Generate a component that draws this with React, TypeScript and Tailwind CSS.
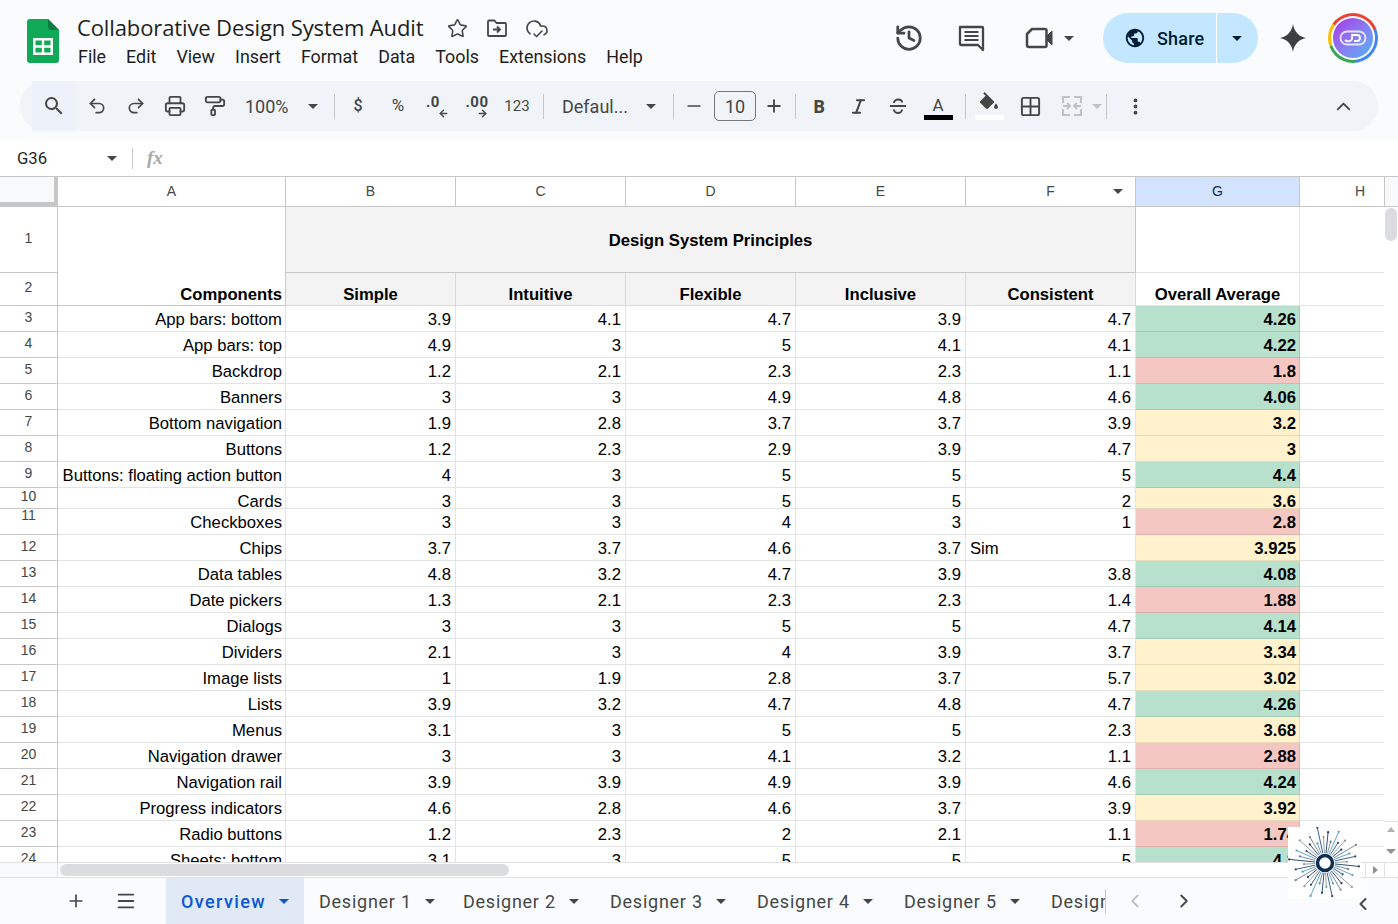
import React from 'react';
import {
  ChevronLeft, ChevronRight, ChevronUp, CloudCheck, Grid2x2, History, Italic, Menu,
  Minus, MoreVertical, PaintRoller, Plus, Printer, Redo2, Star, Undo2,
  ArrowLeft, ArrowRight,
} from 'lucide-react';

type Tone = 'g' | 'r' | 'y';
type Row = { n: number; name: string; vals: string[]; avg: string; tone: Tone };

const rows: Row[] = [
  { n: 3, name: 'App bars: bottom', vals: ['3.9', '4.1', '4.7', '3.9', '4.7'], avg: '4.26', tone: 'g' },
  { n: 4, name: 'App bars: top', vals: ['4.9', '3', '5', '4.1', '4.1'], avg: '4.22', tone: 'g' },
  { n: 5, name: 'Backdrop', vals: ['1.2', '2.1', '2.3', '2.3', '1.1'], avg: '1.8', tone: 'r' },
  { n: 6, name: 'Banners', vals: ['3', '3', '4.9', '4.8', '4.6'], avg: '4.06', tone: 'g' },
  { n: 7, name: 'Bottom navigation', vals: ['1.9', '2.8', '3.7', '3.7', '3.9'], avg: '3.2', tone: 'y' },
  { n: 8, name: 'Buttons', vals: ['1.2', '2.3', '2.9', '3.9', '4.7'], avg: '3', tone: 'y' },
  { n: 9, name: 'Buttons: floating action button', vals: ['4', '3', '5', '5', '5'], avg: '4.4', tone: 'g' },
  { n: 10, name: 'Cards', vals: ['3', '3', '5', '5', '2'], avg: '3.6', tone: 'y' },
  { n: 11, name: 'Checkboxes', vals: ['3', '3', '4', '3', '1'], avg: '2.8', tone: 'r' },
  { n: 12, name: 'Chips', vals: ['3.7', '3.7', '4.6', '3.7', 'Sim'], avg: '3.925', tone: 'y' },
  { n: 13, name: 'Data tables', vals: ['4.8', '3.2', '4.7', '3.9', '3.8'], avg: '4.08', tone: 'g' },
  { n: 14, name: 'Date pickers', vals: ['1.3', '2.1', '2.3', '2.3', '1.4'], avg: '1.88', tone: 'r' },
  { n: 15, name: 'Dialogs', vals: ['3', '3', '5', '5', '4.7'], avg: '4.14', tone: 'g' },
  { n: 16, name: 'Dividers', vals: ['2.1', '3', '4', '3.9', '3.7'], avg: '3.34', tone: 'y' },
  { n: 17, name: 'Image lists', vals: ['1', '1.9', '2.8', '3.7', '5.7'], avg: '3.02', tone: 'y' },
  { n: 18, name: 'Lists', vals: ['3.9', '3.2', '4.7', '4.8', '4.7'], avg: '4.26', tone: 'g' },
  { n: 19, name: 'Menus', vals: ['3.1', '3', '5', '5', '2.3'], avg: '3.68', tone: 'y' },
  { n: 20, name: 'Navigation drawer', vals: ['3', '3', '4.1', '3.2', '1.1'], avg: '2.88', tone: 'r' },
  { n: 21, name: 'Navigation rail', vals: ['3.9', '3.9', '4.9', '3.9', '4.6'], avg: '4.24', tone: 'g' },
  { n: 22, name: 'Progress indicators', vals: ['4.6', '2.8', '4.6', '3.7', '3.9'], avg: '3.92', tone: 'y' },
  { n: 23, name: 'Radio buttons', vals: ['1.2', '2.3', '2', '2.1', '1.1'], avg: '1.74', tone: 'r' },
  { n: 24, name: 'Sheets: bottom', vals: ['3.1', '3', '5', '5', '5'], avg: '4.2', tone: 'g' },
];

const toneClass: Record<Tone, string> = {
  g: 'bg-[#b7e1cd] border-[#a3c9b7]',
  r: 'bg-[#f4c7c3] border-[#dbb2af]',
  y: 'bg-[#fff2cc] border-[#e5d9b7]',
};

function Caret({ className = '' }: { className?: string }) {
  return <span className={`inline-block w-0 h-0 border-l-[5px] border-r-[5px] border-t-[5px] border-l-transparent border-r-transparent ${className}`} />;
}

function Sep() {
  return <div className="w-px h-[25px] bg-[#c7c7c7] shrink-0" />;
}

function Slot({ w, children }: { w: string; children: React.ReactNode }) {
  return <div className={`${w} h-full shrink-0 flex items-center justify-center text-[#444746]`}>{children}</div>;
}

function SheetsLogo() {
  return (
    <svg width="32" height="44" viewBox="0 0 32 44">
      <path d="M3 0h18l11 11v30a3 3 0 0 1-3 3H3a3 3 0 0 1-3-3V3a3 3 0 0 1 3-3z" fill="#0fa958" />
      <path d="M21 0l11 11H24a3 3 0 0 1-3-3z" fill="#0a7c41" />
      <path d="M6 19h20v17H6z M8.500 21.500v4.700h6.300v-4.700z M17.200 21.500v4.700h6.300v-4.700z M8.500 28.700v4.800h6.300v-4.800z M17.200 28.700v4.800h6.300v-4.800z" fill="#fff" fillRule="evenodd" />
    </svg>
  );
}

function TopBar() {
  return (
    <div className="h-[81px] shrink-0 flex items-start">
      <div className="w-[77px] shrink-0 pt-[19px] pl-[27px]">
        <SheetsLogo />
      </div>
      <div className="w-[760px] shrink-0 pt-[12px]">
        <div className="flex items-center h-[30px]">
          <span className="text-[22px] text-[#1f1f1f] tracking-[-0.12px] font-['Open_Sans',sans-serif] w-[367px] whitespace-nowrap">Collaborative Design System Audit</span>
          <Star size={21} strokeWidth={1.8} className="text-[#444746] ml-[3px] mt-[2px]" />
          <svg width="22" height="20" viewBox="0 0 22 20" fill="none" stroke="#444746" strokeWidth="1.800" className="ml-[18px] mt-[2px]">
            <path d="M2 3.500a1 1 0 0 1 1-1h5.500l2 2.500H19a1 1 0 0 1 1 1V17a1 1 0 0 1-1 1H3a1 1 0 0 1-1-1z" strokeLinejoin="round" />
            <path d="M7 11.500h7M11 8.500l3 3-3 3" />
          </svg>
          <CloudCheck size={24} strokeWidth={1.6} className="text-[#444746] ml-[17px] mt-[1px]" />
        </div>
        <div className="flex items-center gap-[20px] text-[17.9px] text-[#1f1f1f] mt-[2px] ml-[1px] h-[26px] font-['Roboto',sans-serif]">
          <span>File</span>
          <span>Edit</span>
          <span>View</span>
          <span>Insert</span>
          <span>Format</span>
          <span>Data</span>
          <span>Tools</span>
          <span>Extensions</span>
          <span>Help</span>
        </div>
      </div>
      <div className="flex items-center pt-[13px] h-[63px] text-[#444746]">
        <History size={30} strokeWidth={2.200} className="ml-[57px]" />
        <svg width="30" height="30" viewBox="0 0 30 30" className="ml-[33px]" fill="none" stroke="currentColor" strokeWidth="2.300">
          <path d="M3 4h22a1 1 0 0 1 1 1v22l-5-5H4a1 1 0 0 1-1-1z" strokeLinejoin="round" />
          <path d="M7.500 9h14M7.500 13h14M7.500 17h14" strokeWidth="2" />
        </svg>
        <svg width="30" height="28" viewBox="0 0 30 28" className="ml-[37px]" fill="none" stroke="currentColor" strokeWidth="2.500">
          <path d="M8 5h13a1.500 1.500 0 0 1 1.500 1.500v15a1.500 1.500 0 0 1-1.500 1.500H5a2 2 0 0 1-2-2V10z" strokeLinejoin="round" />
          <path d="M23 12l5-5v14l-5-5z" fill="currentColor" strokeWidth="1" />
        </svg>
        <Caret className="border-t-[#444746] ml-[10px]" />
        <div className="ml-[29px] w-[155px] h-[50px] rounded-full bg-[#c2e7ff] flex items-center text-[#001d35]">
          <svg width="22" height="22" viewBox="0 0 24 24" fill="currentColor" className="ml-[21px]">
            <path d="M12 2C6.480 2 2 6.480 2 12s4.480 10 10 10 10-4.480 10-10S17.520 2 12 2zm-1 17.930c-3.950-.490-7-3.850-7-7.930 0-.620.080-1.210.210-1.790L9 15v1c0 1.100.900 2 2 2v1.930zm6.900-2.540c-.260-.810-1-1.390-1.900-1.390h-1v-3c0-.550-.450-1-1-1H8v-2h2c.550 0 1-.450 1-1V7h2c1.100 0 2-.900 2-2v-.410c2.930 1.190 5 4.060 5 7.410 0 2.080-.800 3.970-2.100 5.390z" />
          </svg>
          <span className="ml-[11px] text-[18px] font-medium font-['Roboto',sans-serif] tracking-[0.2px] w-[49px]">Share</span>
          <div className="ml-[10px] w-px h-full bg-white" />
          <Caret className="border-t-[#001d35] ml-[15px]" />
        </div>
        <svg width="30" height="30" viewBox="0 0 30 30" className="ml-[20px]" fill="#3c4043">
          <path d="M15 1c1.200 7.500 5.600 12.600 13 14-7.400 1.400-11.800 6.500-13 14-1.200-7.500-5.600-12.600-13-14 7.400-1.400 11.800-6.500 13-14z" />
        </svg>
        <div className="ml-[20px] w-[50px] h-[50px] rounded-full p-[3px] bg-[conic-gradient(#ea4335_0deg_70deg,#4285f4_70deg_175deg,#34a853_175deg_250deg,#fbbc04_250deg_305deg,#ea4335_305deg)]">
          <div className="w-full h-full rounded-full bg-white p-[2px]">
            <div className="w-full h-full rounded-full bg-gradient-to-br from-[#a521e8] to-[#36b5f8] flex items-center justify-center">
              <svg width="28" height="16" viewBox="0 0 28 16" fill="none" stroke="#fff" strokeWidth="1.800">
                <rect x="1.500" y="1.500" width="25" height="13" rx="6.500" opacity="0.800" />
                <path d="M6 10c2 2 6 2 7-1V5h5c4 0 4 6 0 6h-3" />
              </svg>
            </div>
          </div>
        </div>
      </div>
    </div>
  );
}

function DecimalIcon({ label, dir }: { label: string; dir: 'l' | 'r' }) {
  return (
    <div className="flex flex-col items-center text-[#444746] font-['Roboto',sans-serif] font-bold text-[15px] leading-[16px] tracking-[0.5px]">
      <span className={dir === 'l' ? '-ml-[8px]' : ''}>{label}</span>
      {dir === 'l'
        ? <ArrowLeft size={11} strokeWidth={3} className="ml-[12px] -mt-[2px]" />
        : <ArrowRight size={11} strokeWidth={3} className="ml-[10px] -mt-[2px]" />}
    </div>
  );
}

function Toolbar() {
  return (
    <div className="mx-[20px] h-[50px] shrink-0 rounded-full bg-[#f0f4f9] flex items-center pl-[12px] font-['Roboto',sans-serif] text-[#444746]">
      <Slot w="w-[44px] bg-[#edf2fa]">
        <svg width="24" height="24" viewBox="0 0 24 24" fill="currentColor">
          <path d="M15.500 14h-.790l-.280-.270A6.471 6.471 0 0 0 16 9.500 6.500 6.500 0 1 0 9.500 16c1.610 0 3.090-.590 4.230-1.570l.270.280v.790l5 4.990L20.490 19l-4.990-5zm-6 0C7.010 14 5 11.990 5 9.500S7.010 5 9.500 5 14 7.010 14 9.500 11.990 14 9.500 14z" />
        </svg>
      </Slot>
      <Slot w="w-[41px]"><Undo2 size={20} strokeWidth={2} /></Slot>
      <Slot w="w-[38px]"><Redo2 size={20} strokeWidth={2} /></Slot>
      <Slot w="w-[40px]"><Printer size={22} strokeWidth={2} /></Slot>
      <Slot w="w-[39px]"><PaintRoller size={22} strokeWidth={2} /></Slot>
      <span className="ml-[11px] w-[46px] text-[18px] text-[#444746]">100%</span>
      <Slot w="w-[43px]"><Caret className="border-t-[#444746]" /></Slot>
      <Sep />
      <Slot w="w-[46px]"><span className="text-[16px] font-medium">$</span></Slot>
      <Slot w="w-[34px]"><span className="text-[17px]">%</span></Slot>
      <Slot w="w-[44px]"><DecimalIcon label=".0" dir="l" /></Slot>
      <Slot w="w-[36px]"><DecimalIcon label=".00" dir="r" /></Slot>
      <Slot w="w-[44px]"><span className="text-[15px]">123</span></Slot>
      <div className="ml-[4px]"><Sep /></div>
      <span className="ml-[18px] w-[67px] text-[18px] whitespace-nowrap">Defaul...</span>
      <Slot w="w-[44px]"><Caret className="border-t-[#444746]" /></Slot>
      <Sep />
      <Slot w="w-[40px]"><Minus size={20} strokeWidth={2} /></Slot>
      <div className="w-[42px] h-[30px] shrink-0 rounded-[5px] border border-[#747775] flex items-center justify-center text-[18px]">10</div>
      <Slot w="w-[36px]"><Plus size={20} strokeWidth={2.200} /></Slot>
      <div className="ml-[3px]"><Sep /></div>
      <Slot w="w-[46px]"><span className="text-[18px] font-bold font-['Open_Sans',sans-serif]">B</span></Slot>
      <Slot w="w-[33px]"><Italic size={19} strokeWidth={2.600} /></Slot>
      <Slot w="w-[46px]">
        <svg width="24" height="24" viewBox="0 0 24 24" fill="none" stroke="currentColor" strokeWidth="2">
          <path d="M4 12h16M8 9c0-2 2-3.500 4-3.500s4 1 4 3M8 15.500c0 2 2 3.500 4 3.500s4-1.500 4-3.500" />
        </svg>
      </Slot>
      <Slot w="w-[34px]">
        <div className="flex flex-col items-center w-[29px] pt-[2px]">
          <span className="text-[17px] leading-[20px]">A</span>
          <div className="w-[29px] h-[5px] bg-black" />
        </div>
      </Slot>
      <div className="ml-[10px]"><Sep /></div>
      <Slot w="w-[46px]">
        <div className="flex flex-col items-center w-[29px]">
          <svg width="24" height="23" viewBox="0 0 24 23" fill="#444746">
            <path d="M16.560 8.940L7.620 0 6.210 1.410l2.380 2.380-5.150 5.150c-.590.590-.590 1.540 0 2.120l5.500 5.500c.290.290.680.440 1.060.440s.770-.150 1.060-.440l5.500-5.500c.590-.580.590-1.530 0-2.120zM19 11.500s-2 2.170-2 3.500c0 1.100.900 2 2 2s2-.900 2-2c0-1.330-2-3.500-2-3.500z" />
          </svg>
          <div className="w-[29px] h-[5px] bg-white" />
        </div>
      </Slot>
      <Slot w="w-[36px]"><Grid2x2 size={23} strokeWidth={2} /></Slot>
      <Slot w="w-[47px]">
        <svg width="24" height="24" viewBox="0 0 24 24" fill="none" stroke="#bfc2c5" strokeWidth="2">
          <path d="M10 3H3v6M14 3h7v6M10 21H3v-6M14 21h7v-6M3 12h6M7 9l3 3-3 3M21 12h-6M17 9l-3 3 3 3" />
        </svg>
      </Slot>
      <Caret className="border-t-[#bfc2c5] -ml-[3px]" />
      <div className="ml-[4px]"><Sep /></div>
      <Slot w="w-[57px]"><MoreVertical size={21} strokeWidth={2.400} /></Slot>
      <Slot w="w-[57px] ml-[151px]"><ChevronUp size={23} strokeWidth={2} /></Slot>
    </div>
  );
}

function FormulaBar() {
  return (
    <div className="h-[37px] shrink-0 bg-white flex items-center border-b border-[#c7c7c7] font-['Roboto',sans-serif]">
      <span className="w-[102px] pl-[17px] pt-[1px] text-[16.67px] text-[#1f1f1f]">G36</span>
      <Caret className="border-t-[#444746] ml-[5px]" />
      <div className="ml-[15px] w-px h-[21px] bg-[#c7c7c7]" />
      <span className="ml-[14px] text-[19px] italic font-bold text-[#a7a9ab] font-['Liberation_Serif',serif]">fx</span>
    </div>
  );
}

function ColHeaders() {
  const cols = [
    { l: 'A', w: 'w-[228px]' }, { l: 'B', w: 'w-[170px]' }, { l: 'C', w: 'w-[170px]' }, { l: 'D', w: 'w-[170px]' },
    { l: 'E', w: 'w-[170px]' },
  ];
  return (
    <div className="h-[30px] shrink-0 flex border-b border-[#c7c7c7] text-[14px] text-[#444746] font-['Liberation_Sans',sans-serif]">
      <div className="w-[58px] shrink-0 bg-[#f8f9fa] border-r-[4px] border-b-[4px] border-[#c7c7c7]" />
      {cols.map(c => (
        <div key={c.l} className={`${c.w} shrink-0 flex items-center justify-center border-r border-[#c7c7c7]`}>{c.l}</div>
      ))}
      <div className="w-[170px] shrink-0 flex items-center justify-center border-r border-[#c7c7c7] relative">
        F
        <Caret className="absolute right-[12px] top-[12px] border-t-[#444746]" />
      </div>
      <div className="w-[164px] shrink-0 flex items-center justify-center bg-[#d3e3fd] text-[#0b2a5c] border-r border-[#c7c7c7]">G</div>
      <div className="w-[85px] shrink-0 flex items-center justify-center pl-[36px] border-r border-[#c7c7c7]">H</div>
      <div className="flex-1 bg-[#f8f9fa]" />
    </div>
  );
}

function RowNum({ n, h, up = 'pb-[3px]' }: { n: number; h: string; up?: string }) {
  return <div className={`${h} ${up} w-[58px] shrink-0 flex items-center justify-center border-r border-b border-[#c7c7c7] text-[14px] text-[#444746]`}>{n}</div>;
}

function DataRow({ row }: { row: Row }) {
  const h = row.n === 10 ? 'h-[21px]' : 'h-[26px]';
  // row 10 is squeezed: its text sits low and spills onto the line below
  const place = row.n === 10 ? 'items-start pt-[4px]' : 'items-end pb-px';
  return (
    <div className={`${h} flex shrink-0`}>
      <RowNum n={row.n} h={h} up={row.n === 11 ? 'pb-[12px]' : 'pb-[3px]'} />
      <div className={`w-[228px] shrink-0 flex ${place} justify-end pr-[3px] border-r border-b border-[#e2e3e3] whitespace-nowrap leading-[20px]`}>{row.name}</div>
      {row.vals.map((v, i) => (
        <div key={i} className={`w-[170px] shrink-0 flex ${place} ${v === 'Sim' ? 'justify-start pl-[4px]' : 'justify-end pr-[4px]'} border-r border-b border-[#e2e3e3] leading-[20px]`}>{v}</div>
      ))}
      <div className={`w-[164px] shrink-0 flex ${place} justify-end pr-[3px] border-r border-b font-bold leading-[20px] ${toneClass[row.tone]}`}>{row.avg}</div>
      <div className="w-[85px] shrink-0 border-r border-b border-[#e2e3e3]" />
    </div>
  );
}

function Grid() {
  return (
    <div className="flex flex-1 min-h-0">
      <div className="w-[1384px] shrink-0 overflow-hidden text-[16.67px] text-black font-['Liberation_Sans',sans-serif]">
        <div className="flex h-[99px]">
          <div className="w-[58px] shrink-0">
            <RowNum n={1} h="h-[66px]" />
            <RowNum n={2} h="h-[33px]" />
          </div>
          <div className="w-[228px] shrink-0 flex items-end justify-end pr-[3px] border-r border-b border-[#c7c7c7] font-bold leading-[20px]">Components</div>
          <div className="w-[850px] shrink-0">
            <div className="h-[66px] pt-px flex items-center justify-center bg-[#f3f3f3] border-r border-b border-[#c7c7c7] font-bold">Design System Principles</div>
            <div className="h-[33px] flex font-bold">
              {['Simple', 'Intuitive', 'Flexible', 'Inclusive', 'Consistent'].map(t => (
                <div key={t} className="w-[170px] shrink-0 flex items-end justify-center leading-[20px] bg-[#f3f3f3] border-r border-b border-[#d9d9d9]">{t}</div>
              ))}
            </div>
          </div>
          <div className="w-[164px] shrink-0">
            <div className="h-[66px] border-r border-b border-[#e2e3e3]" />
            <div className="h-[33px] flex items-end justify-center leading-[20px] font-bold border-r border-b border-[#e2e3e3]">Overall Average</div>
          </div>
          <div className="w-[85px] shrink-0">
            <div className="h-[66px] border-r border-b border-[#e2e3e3]" />
            <div className="h-[33px] border-r border-b border-[#e2e3e3]" />
          </div>
        </div>
        {rows.map(r => <DataRow key={r.n} row={r} />)}
      </div>
      <div className="flex-1 flex flex-col justify-between items-center py-[1px]">
        <div className="w-[12px] h-[33px] rounded-full bg-[#dadce0]" />
        <div className="w-full flex flex-col items-center gap-[17px] pb-[7px] border-t border-[#e0e0e0]">
          <span className="w-0 h-0 mt-[5px] border-l-[4px] border-r-[4px] border-b-[5px] border-l-transparent border-r-transparent border-b-[#b0b3b6]" />
          <Caret className="border-t-[#8e9193]" />
        </div>
      </div>
    </div>
  );
}

function HScroll() {
  return (
    <div className="h-[16px] shrink-0 flex border-t border-b border-[#e0e0e0] bg-white">
      <div className="w-[58px] shrink-0 bg-[#f8f9fa] border-r border-[#e0e0e0]" />
      <div className="flex-1 pt-[1px] pl-[2px]">
        <div className="w-[449px] h-[12px] rounded-full bg-[#dadce0]" />
      </div>
      <div className="w-[19px] shrink-0 flex items-center justify-center border-l border-[#e0e0e0]">
        <span className="w-0 h-0 border-t-[4px] border-b-[4px] border-l-[5px] border-t-transparent border-b-transparent border-l-[#8e9193]" />
      </div>
      <div className="w-[14px] shrink-0 border-l border-[#e0e0e0]" />
    </div>
  );
}

function Tab({ label, w }: { label: string; w: string }) {
  return (
    <div className={`${w} shrink-0 h-full flex items-center pl-[15px] text-[#444746] text-[18px] tracking-[0.75px] font-['Roboto',sans-serif]`}>
      <span>{label}</span>
      <Caret className="border-t-[#444746] ml-[13px]" />
    </div>
  );
}

function TabBar() {
  return (
    <div className="h-[46px] shrink-0 bg-[#f9fbfd] flex items-center">
      <Plus size={20} strokeWidth={2} className="ml-[66px] text-[#444746]" />
      <Menu size={22} strokeWidth={2} className="ml-[29px] text-[#444746]" />
      <div className="ml-[29px] w-[138px] h-full bg-[#e1e9f7] flex items-center pl-[15px] text-[#0b57d0] text-[18px] font-medium tracking-[1.4px] font-['Roboto',sans-serif]">
        <span>Overview</span>
        <Caret className="border-t-[#0b57d0] ml-[13px]" />
      </div>
      <Tab label="Designer 1" w="w-[144px]" />
      <Tab label="Designer 2" w="w-[147px]" />
      <Tab label="Designer 3" w="w-[147px]" />
      <Tab label="Designer 4" w="w-[147px]" />
      <Tab label="Designer 5" w="w-[162px]" />
      <div className="w-[55px] h-[25px] overflow-hidden border-r border-[#c7c7c7] text-[#444746] text-[18px] tracking-[0.75px] font-['Roboto',sans-serif] leading-[25px] whitespace-nowrap">Designer 6</div>
      <ChevronLeft size={22} strokeWidth={2} className="ml-[18px] text-[#bdc1c6]" />
      <ChevronRight size={22} strokeWidth={2} className="ml-[27px] text-[#444746]" />
      <ChevronLeft size={20} strokeWidth={2.400} className="ml-[158px] mt-[6px] text-[#444746]" />
    </div>
  );
}

function BurstLogo() {
  // lines fan out from the ring, every other one longer, with a dot at the tip
  const spokes = Array.from({ length: 40 }, (_, i) => {
    const a = (i / 40) * Math.PI * 2 + 0.1;
    const len = [34, 24, 30, 21, 36, 26, 31, 22][i % 8];
    const colors = ['#1c3d63', '#6f7f90', '#4f9cc4', '#2b4f78', '#8a95a0'];
    return {
      x1: 37 + Math.cos(a) * 10,
      y1: 36 + Math.sin(a) * 10,
      x2: 37 + Math.cos(a) * len,
      y2: 36 + Math.sin(a) * len,
      c: colors[i % 5],
    };
  });
  return (
    <div className="absolute left-[1288px] top-[827px] w-[73px] h-[72px] bg-white">
      <svg width="73" height="72" viewBox="0 0 73 72">
        {spokes.map((s, i) => (
          <g key={i}>
            <line x1={s.x1} y1={s.y1} x2={s.x2} y2={s.y2} stroke={s.c} strokeWidth="0.900" />
            <circle cx={s.x2} cy={s.y2} r="1.100" fill={s.c} />
          </g>
        ))}
        <circle cx="37" cy="36" r="7.500" fill="#fff" stroke="#0f2f52" strokeWidth="3.500" />
      </svg>
    </div>
  );
}

export default function App() {
  return (
    <div className="relative w-[1398px] h-[924px] overflow-hidden flex flex-col bg-[#f9fbfd]">
      <TopBar />
      <Toolbar />
      <div className="flex-1 min-h-0 mt-[9px] flex flex-col bg-white">
        <FormulaBar />
        <ColHeaders />
        <Grid />
        <HScroll />
      </div>
      <TabBar />
      <BurstLogo />
    </div>
  );
}
